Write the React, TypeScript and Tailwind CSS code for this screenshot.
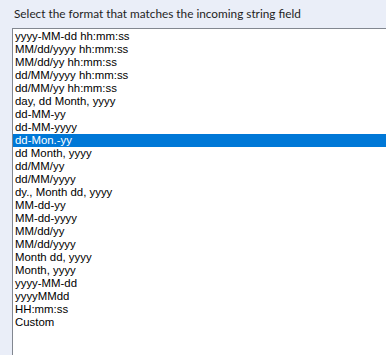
import React from "react";

const items = [
  "yyyy-MM-dd hh:mm:ss",
  "MM/dd/yyyy hh:mm:ss",
  "MM/dd/yy hh:mm:ss",
  "dd/MM/yyyy hh:mm:ss",
  "dd/MM/yy hh:mm:ss",
  "day, dd Month, yyyy",
  "dd-MM-yy",
  "dd-MM-yyyy",
  "dd-Mon.-yy",
  "dd Month, yyyy",
  "dd/MM/yy",
  "dd/MM/yyyy",
  "dy., Month dd, yyyy",
  "MM-dd-yy",
  "MM-dd-yyyy",
  "MM/dd/yy",
  "MM/dd/yyyy",
  "Month dd, yyyy",
  "Month, yyyy",
  "yyyy-MM-dd",
  "yyyyMMdd",
  "HH:mm:ss",
  "Custom",
];

export default function App() {
  return (
    <div className="w-[386px] h-[355px] bg-[#eaeef8] flex flex-col pl-[12px] overflow-hidden">
      <div
        className="pt-[6px] pl-[2px] h-[28px] text-[11.8px] leading-[16px] text-[#1e1e1e]"
        style={{ fontFamily: 'Lato, "Noto Sans", sans-serif' }}
      >
        Select the format that matches the incoming string field
      </div>
      <div
        className="flex-1 bg-white border-l border-t border-[#828790] pt-[1px] flex flex-col"
        style={{ fontFamily: '"Liberation Sans", Arial, sans-serif' }}
      >
        {items.map((it, i) => (
          <div
            key={i}
            className={
              "h-[13px] leading-[13px] text-[11.4px] pl-[2px] whitespace-nowrap " +
              (i === 8 ? "bg-[#0078d7] text-white" : "text-black")
            }
          >
            {it}
          </div>
        ))}
      </div>
    </div>
  );
}
